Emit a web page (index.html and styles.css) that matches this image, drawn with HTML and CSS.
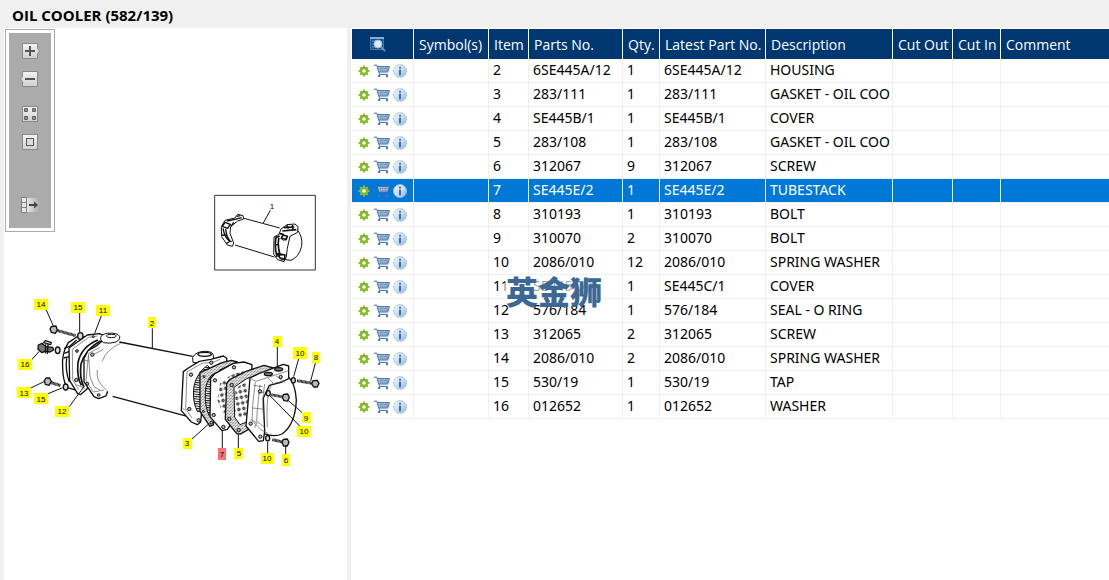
FILE: index.html
```html
<!DOCTYPE html>
<html lang="en">
<head>
<meta charset="utf-8">
<title>OIL COOLER (582/139)</title>
<link rel="stylesheet" href="styles.css">
</head>
<body>
<svg class="sprite" aria-hidden="true">
  <defs>
    <linearGradient id="tile" x1="0" y1="0" x2="0" y2="1"><stop offset="0" stop-color="#f4f4f4"/><stop offset="1" stop-color="#cfcfcf"/></linearGradient>
    <linearGradient id="fade" x1="0" y1="0" x2="1" y2="0"><stop offset="0" stop-color="#e8e8e8"/><stop offset="1" stop-color="#ababab"/></linearGradient>
    <linearGradient id="ball" x1="0" y1="0" x2="1" y2="1"><stop offset="0" stop-color="#eef6fc"/><stop offset="0.5" stop-color="#c9dff0"/><stop offset="1" stop-color="#8db4d6"/></linearGradient>
    <symbol id="gear" viewBox="0 0 12 12">
      <path d="M6 .6V11.4M.6 6H11.4M2.200 2.200L9.800 9.800M9.800 2.200L2.200 9.800" stroke="#8fc035" stroke-width="2"/>
      <circle cx="6" cy="6" r="3" fill="#fff" stroke="#86b82a" stroke-width="2.400"/>
    </symbol>
    <symbol id="cart" viewBox="0 0 16 14">
      <path d="M3.500 2.500H15.300L13.600 8H5.200Z" fill="#c6d5e6"/>
      <path d="M0 1.200H2.700L5.600 10.500M3.300 2.600H15.400L13.800 8H5M5.400 10.400H13.600" fill="none" stroke="#3f6ca5" stroke-width="1"/>
      <path d="M4 4.400H14.800M4.600 6.200H14.200M6.200 2.600L7 8M8.600 2.600L9 8M11 2.600V8M13.200 2.600L12.400 8" fill="none" stroke="#6489b8" stroke-width=".7"/>
      <circle cx="5.200" cy="12" r="1.200" fill="#4d78ad"/><circle cx="13" cy="12" r="1.200" fill="#4d78ad"/>
    </symbol>
    <symbol id="info" viewBox="0 0 14 14">
      <circle cx="7" cy="7" r="6.500" fill="url(#ball)" stroke="#a9c4dc" stroke-width="0.800"/>
      <path d="M6 2.800H8V4.600H6ZM6 5.800H8V11.200H6Z" fill="#386ca5"/>
    </symbol>
  </defs>
</svg>

<header class="title-bar"><h1>OIL COOLER (582/139)</h1></header>

<main class="split">
  <section class="drawing" aria-label="Parts drawing">
    <svg class="sheet" viewBox="0 28 343 552" role="img" aria-label="Exploded view of the oil cooler">
      <defs>
        <pattern id="grain" width="9" height="9" patternUnits="userSpaceOnUse">
          <rect width="9" height="9" fill="#dcdcdc"/>
          <path d="M1 1h2v2h-2zM6 3h2v1h-2zM3 6h2v2h-2zM7 7h1v2h-1z" fill="#555"/>
        </pattern>
        <pattern id="holes" width="15" height="17" patternUnits="userSpaceOnUse" patternTransform="rotate(-12)">
          <circle cx="6" cy="7" r="4" fill="#777" stroke="#111" stroke-width="2.400"/>
        </pattern>
        <pattern id="fins" width="8" height="7" patternUnits="userSpaceOnUse" patternTransform="rotate(8)">
          <rect width="8" height="7" fill="#fff"/><rect width="8" height="3" fill="#111"/>
        </pattern>
      </defs>

      <!-- inset view -->
      <g transform="translate(201 185) scale(.3333)" class="ink">
        <rect x="29" y="31" width="302" height="224" class="frame"/>
        <path d="M196 76L175 114M117 100L224 129M90 180L208 216" class="line"/>
        <path d="M90 99L60 106L49 125L50 155L67 180L82 184L86 174L75 145L77 125L98 108L116 102L114 92L98 88Z"/>
        <path d="M52 124L68 130L76 118L60 112ZM54 130Q60 165 80 170M62 132Q64 155 74 166M50 150L64 152M66 108L90 103L110 98M78 124L86 112M65 175L76 168M96 94L106 92" class="dark"/>
        <path d="M275 132Q294 154 290 184Q282 216 258 226L242 224L238 160Z"/>
        <path d="M228 132L246 119L270 117L279 125L278 142L255 154L247 190L244 216L237 230L218 224L206 208L207 156L222 148Z"/>
        <path d="M232 138L274 134M236 128L268 126M246 121L250 132M262 120L264 132M214 154Q207 180 216 216M222 158Q216 180 226 212M234 150L247 154L243 164L229 160ZM212 158L224 153M209 178L221 180M218 206L240 210L238 224L224 218ZM224 146L236 148" class="heavy"/>
        <circle cx="236" cy="163" r="3"/><circle cx="231" cy="222" r="3"/>
      </g>

      <!-- end cover, flange and tap on the left -->
      <g transform="translate(6 290) scale(.3333)" class="ink">
        <path d="M205 138L175 158Q154 190 158 235Q159 270 170 292L195 300L250 145Z" class="edge"/>
        <path d="M163 190L178 184M161 204L178 200M162 176L180 168L200 150M170 205Q165 240 178 276" class="dark"/>
        <path d="M177 174L232 135L268 131L290 140L286 160L240 200L232 296L211 314L203 311L179 272Z" class="edge"/>
        <path d="M187 178L236 142L262 138M187 178L188 268L205 298M199 284L226 296" class="thin"/>
        <path d="M264 150Q214 170 204 218Q200 262 214 286M272 152Q226 178 213 222Q208 262 221 290" class="heavy"/>
        <path d="M222 205L234 182L262 166L282 148L310 146L330 150L336 155L334 308L292 292L292 316L266 326L252 320L222 275Z" stroke="none"/>
        <path d="M282 148L262 166L234 182L222 205L222 275L252 320L266 326L288 318L293 304" class="dark"/>
        <path d="M272 148Q270 133 292 130Q322 127 329 139Q330 151 318 156Q300 162 280 158Z"/>
        <ellipse cx="304" cy="138" rx="15" ry="5"/>
        <path d="M236 190L228 272L250 306L282 300M236 190L270 172M246 196L280 178M332 160Q292 176 276 214M262 240Q256 275 290 300M224 210L236 214M236 196L240 260L252 290L270 300" class="thin"/>
        <circle cx="201" cy="183" r="4"/><circle cx="199" cy="270" r="5"/><circle cx="247" cy="194" r="5"/><circle cx="232" cy="281" r="4"/><circle cx="266" cy="315" r="4"/><circle cx="250" cy="140" r="3"/>
        <path d="M140 121L197 137" class="shaft"/>
        <path d="M124 110L138 108L142 120L136 130L124 127L120 117Z" class="head"/>
        <ellipse cx="211" cy="138" rx="8" ry="10" class="ring"/>
        <ellipse cx="143" cy="181" rx="7" ry="10" class="ring"/>
        <path d="M85 165L96 160L108 170L128 172L131 180L120 186L104 184L96 188L84 178Z" class="metal"/>
        <path d="M101 158L106 152L124 158L122 164ZM107 163L106 190M114 164L112 192" class="dark"/>
        <path d="M121 277L152 287" class="shaft"/>
        <path d="M108 264L119 264L124 275L117 286L106 283L103 272Z" class="head"/>
        <ellipse cx="167" cy="291" rx="7" ry="9" class="ring"/>
        <path d="M108 58L130 108M209 65V126M277 70L254 130M64 210L88 184M56 297L102 275M107 314L158 293M178 350L224 287" class="line"/>
      </g>

      <!-- housing flange, gasket and tube stack -->
      <g transform="translate(116 310) scale(.3333)" class="ink">
        <path d="M-2 96L218 139M-22 259L205 320" class="edge"/>
        <path d="M219 158L218 142Q228 124 255 124Q281 124 280 138L282 156Z"/>
        <ellipse cx="254" cy="133" rx="20" ry="6" class="dark"/>
        <path d="M190 185L205 174L238 154L272 148L310 138L320 145L320 156L256 190L242 336L232 344L214 336L184 302Z" class="edge"/>
        <path d="M201 186L246 160L282 156L300 148M201 186L197 296L216 324M197 300L188 296" class="thin"/>
        <path d="M262 166Q230 190 222 228Q216 274 232 304L258 306L276 180Z" fill="url(#fins)"/>
        <path d="M240 188L306 158L334 151L352 156L300 180L280 345L270 349L240 304Z" fill="url(#grain)" class="edge"/>
        <path d="M278 192Q256 214 256 250Q254 290 268 318L286 320L290 196Z" fill="url(#fins)"/>
        <path d="M272 205L286 190L340 160L372 156L396 164L392 260L322 358L306 362L270 320Z" class="edge"/>
        <path d="M300 220L328 198L372 180L372 300L320 336L292 270Z" fill="url(#holes)" stroke="none"/>
        <circle cx="213" cy="194" r="5"/><circle cx="208" cy="297" r="5"/><circle cx="236" cy="331" r="5"/><circle cx="274" cy="158" r="5"/><circle cx="285" cy="211" r="5"/><circle cx="281" cy="315" r="5"/><circle cx="310" cy="351" r="5"/><circle cx="342" cy="172" r="5"/><circle cx="252" cy="200" r="3"/><circle cx="250" cy="304" r="3"/><circle cx="274" cy="338" r="4"/>
        <path d="M97 55V116M215 388L268 340M307 415V360" class="line"/>
      </g>

      <!-- right gasket, end cover and bolts -->
      <g transform="translate(216 330) scale(.3333)" class="ink">
        <path d="M20 160L30 148L78 124L132 106L160 114L100 290L62 312L50 311L16 268Z" fill="url(#grain)" class="edge"/>
        <path d="M42 172L80 146L112 134L90 272L60 284L44 262Z" fill="#fff"/>
        <path d="M46 176L80 152L88 262L60 262L46 245Z" fill="url(#holes)" stroke="none"/>
        <path d="M204 140Q226 158 229 210Q226 284 186 312Q164 322 134 312" class="edge"/>
        <path d="M90 144L118 130L190 103L206 108L206 146L186 156L148 166L130 204L134 304L130 332L116 334L78 288L84 220Z" class="edge"/>
        <path d="M92 146L108 154L206 122M106 156L98 226L96 272L124 300L144 310M120 164L112 240L110 274L134 292M134 162Q124 220 132 270M100 166L128 170M114 190L134 186M98 234L132 238M168 138L196 158M144 144L158 158L148 178M92 268L110 278L104 294" class="thin"/>
        <path d="M208 144Q186 158 164 160M148 176Q138 220 142 292" class="thin"/>
        <ellipse cx="145" cy="132" rx="12" ry="5" class="metal"/><ellipse cx="176" cy="118" rx="12" ry="5" class="metal"/>
        <circle cx="182" cy="141" r="5"/><circle cx="120" cy="184" r="5"/><circle cx="92" cy="281" r="5"/><circle cx="121" cy="320" r="5"/><circle cx="35" cy="165" r="5"/><circle cx="28" cy="267" r="5"/><circle cx="56" cy="300" r="5"/>
        <path d="M231 152L278 160M154 194L190 201M157 329L188 336" class="shaft"/>
        <path d="M279 152L292 151L297 160L292 171L281 171L275 161Z" class="head"/>
        <path d="M191 193L203 192L208 202L203 213L192 212L187 202Z" class="head"/>
        <path d="M190 328L202 327L207 337L202 348L191 348L186 338Z" class="head"/>
        <ellipse cx="220" cy="151" rx="6" ry="8" class="ring"/><ellipse cx="145" cy="190" rx="6" ry="8" class="ring"/><ellipse cx="143" cy="325" rx="6" ry="8" class="ring"/>
        <path d="M172 47V110M237 82L221 140M287 96L272 153M249 250L204 211M241 290L150 197M143 370V336M197 375V348M55 360V312" class="line"/>
      </g>

      <g class="tags">
        <rect x="30" y="299" width="14" height="11"/><rect x="67" y="302" width="14" height="11"/><rect x="92" y="305" width="14" height="11"/><rect x="14" y="359" width="14" height="11"/><rect x="13" y="387" width="14" height="11"/><rect x="30" y="393" width="14" height="11"/><rect x="51" y="406" width="14" height="11"/><rect x="144" y="317" width="8" height="11"/><rect x="179" y="438" width="9" height="11"/><rect x="214" y="448" width="8" height="12" class="hot"/><rect x="230" y="448" width="9" height="11"/><rect x="269" y="336" width="9" height="11"/><rect x="289" y="347" width="14" height="12"/><rect x="308" y="352" width="8" height="11"/><rect x="298" y="412" width="9" height="11"/><rect x="293" y="426" width="14" height="11"/><rect x="257" y="453" width="13" height="11"/><rect x="278" y="454" width="8" height="12"/>
        <text x="37" y="307">14</text><text x="74" y="310">15</text><text x="99" y="313">11</text><text x="21" y="367">16</text><text x="20" y="396">13</text><text x="37" y="402">15</text><text x="58" y="414">12</text><text x="148" y="326">2</text><text x="183" y="446">3</text><text x="218" y="457">7</text><text x="235" y="456">5</text><text x="273" y="344">4</text><text x="296" y="356">10</text><text x="312" y="360">8</text><text x="302" y="421">9</text><text x="300" y="434">10</text><text x="263" y="461">10</text><text x="282" y="463">6</text><text x="268" y="209">1</text>
      </g>
    </svg>

    <div class="tools" role="toolbar" aria-label="Drawing tools">
      <button type="button" aria-label="Zoom in"><svg viewBox="0 0 20 16"><path d="M2.500 .5H17.500V5.500L19.500 8L17.500 10.500V15.500H2.500Z" fill="url(#tile)" stroke="#8a8a8a"/><path d="M10 3V13M5 8H15" stroke="#555" stroke-width="2"/></svg></button>
      <button type="button" aria-label="Zoom out"><svg viewBox="0 0 20 16"><path d="M2.500 .5H17.500V15.500H2.500V10.500L.5 8L2.500 5.500Z" fill="url(#tile)" stroke="#8a8a8a"/><path d="M5 8H15" stroke="#555" stroke-width="2"/></svg></button>
      <button type="button" class="group" aria-label="Fit to window"><svg viewBox="0 0 20 16"><rect x="2.500" y=".5" width="15" height="15" fill="url(#tile)" stroke="#8a8a8a"/><path d="M4.500 2.500h3v3h-3zM12.500 2.500h3v3h-3zM4.500 10.500h3v3h-3zM12.500 10.500h3v3h-3z" fill="#888" stroke="#666"/></svg></button>
      <button type="button" aria-label="Actual size"><svg viewBox="0 0 20 16"><rect x="2.500" y=".5" width="15" height="15" fill="url(#tile)" stroke="#8a8a8a"/><rect x="6.500" y="4.500" width="7" height="7" fill="#ddd" stroke="#555"/></svg></button>
      <button type="button" class="last" aria-label="Show list"><svg viewBox="0 0 20 16"><rect x="7" y="1" width="12" height="14" fill="url(#fade)"/><path d="M1.500 .5h5v15h-5zM1.500 5.500h5M1.500 10.500h5" fill="#e6e6e6" stroke="#808080"/><path d="M9 8H15" stroke="#444" stroke-width="2"/><path d="M14 4.500L18 8L14 11.500Z" fill="#444"/></svg></button>
    </div>
  </section>

  <section class="parts">
    <table>
      <colgroup><col class="c-act"><col class="c-sym"><col class="c-item"><col class="c-part"><col class="c-qty"><col class="c-latest"><col class="c-desc"><col class="c-out"><col class="c-in"><col></colgroup>
      <thead>
        <tr><th class="find"><button type="button" aria-label="Search"><svg viewBox="0 0 16 16"><path d="M.5 1.500H13.500V13.500H.5Z" fill="#155082" stroke="#3a78ad"/><path d="M0 2H14" stroke="#7fb0d8" stroke-width="2"/><path d="M2 5h3M2 8h3M2 11h3" stroke="#5f9bcb"/><path d="M11 11L15 15" stroke="#5c93c4" stroke-width="2"/><circle cx="8" cy="8" r="4" fill="#dcebf5" stroke="#9bb9d0"/></svg></button></th><th>Symbol(s)</th><th>Item</th><th>Parts No.</th><th>Qty.</th><th>Latest Part No.</th><th>Description</th><th>Cut Out</th><th>Cut In</th><th>Comment</th></tr>
      </thead>
      <tbody>
        <tr><td class="act"><button type="button" aria-label="Options"><svg class="g"><use href="#gear"/></svg></button><button type="button" aria-label="Add to cart"><svg class="k"><use href="#cart"/></svg></button><button type="button" aria-label="Information"><svg class="i"><use href="#info"/></svg></button></td><td></td><td>2</td><td>6SE445A/12</td><td>1</td><td>6SE445A/12</td><td>HOUSING</td><td></td><td></td><td></td></tr>
        <tr><td class="act"><button type="button" aria-label="Options"><svg class="g"><use href="#gear"/></svg></button><button type="button" aria-label="Add to cart"><svg class="k"><use href="#cart"/></svg></button><button type="button" aria-label="Information"><svg class="i"><use href="#info"/></svg></button></td><td></td><td>3</td><td>283/111</td><td>1</td><td>283/111</td><td>GASKET - OIL COO</td><td></td><td></td><td></td></tr>
        <tr><td class="act"><button type="button" aria-label="Options"><svg class="g"><use href="#gear"/></svg></button><button type="button" aria-label="Add to cart"><svg class="k"><use href="#cart"/></svg></button><button type="button" aria-label="Information"><svg class="i"><use href="#info"/></svg></button></td><td></td><td>4</td><td>SE445B/1</td><td>1</td><td>SE445B/1</td><td>COVER</td><td></td><td></td><td></td></tr>
        <tr><td class="act"><button type="button" aria-label="Options"><svg class="g"><use href="#gear"/></svg></button><button type="button" aria-label="Add to cart"><svg class="k"><use href="#cart"/></svg></button><button type="button" aria-label="Information"><svg class="i"><use href="#info"/></svg></button></td><td></td><td>5</td><td>283/108</td><td>1</td><td>283/108</td><td>GASKET - OIL COO</td><td></td><td></td><td></td></tr>
        <tr><td class="act"><button type="button" aria-label="Options"><svg class="g"><use href="#gear"/></svg></button><button type="button" aria-label="Add to cart"><svg class="k"><use href="#cart"/></svg></button><button type="button" aria-label="Information"><svg class="i"><use href="#info"/></svg></button></td><td></td><td>6</td><td>312067</td><td>9</td><td>312067</td><td>SCREW</td><td></td><td></td><td></td></tr>
        <tr class="selected" aria-selected="true"><td class="act"><button type="button" aria-label="Options"><svg class="g"><use href="#gear"/></svg></button><button type="button" aria-label="Add to cart"><svg class="k"><use href="#cart"/></svg></button><button type="button" aria-label="Information"><svg class="i"><use href="#info"/></svg></button></td><td></td><td>7</td><td>SE445E/2</td><td>1</td><td>SE445E/2</td><td>TUBESTACK</td><td></td><td></td><td></td></tr>
        <tr><td class="act"><button type="button" aria-label="Options"><svg class="g"><use href="#gear"/></svg></button><button type="button" aria-label="Add to cart"><svg class="k"><use href="#cart"/></svg></button><button type="button" aria-label="Information"><svg class="i"><use href="#info"/></svg></button></td><td></td><td>8</td><td>310193</td><td>1</td><td>310193</td><td>BOLT</td><td></td><td></td><td></td></tr>
        <tr><td class="act"><button type="button" aria-label="Options"><svg class="g"><use href="#gear"/></svg></button><button type="button" aria-label="Add to cart"><svg class="k"><use href="#cart"/></svg></button><button type="button" aria-label="Information"><svg class="i"><use href="#info"/></svg></button></td><td></td><td>9</td><td>310070</td><td>2</td><td>310070</td><td>BOLT</td><td></td><td></td><td></td></tr>
        <tr><td class="act"><button type="button" aria-label="Options"><svg class="g"><use href="#gear"/></svg></button><button type="button" aria-label="Add to cart"><svg class="k"><use href="#cart"/></svg></button><button type="button" aria-label="Information"><svg class="i"><use href="#info"/></svg></button></td><td></td><td>10</td><td>2086/010</td><td>12</td><td>2086/010</td><td>SPRING WASHER</td><td></td><td></td><td></td></tr>
        <tr><td class="act"><button type="button" aria-label="Options"><svg class="g"><use href="#gear"/></svg></button><button type="button" aria-label="Add to cart"><svg class="k"><use href="#cart"/></svg></button><button type="button" aria-label="Information"><svg class="i"><use href="#info"/></svg></button></td><td></td><td>11</td><td>SE445C/1</td><td>1</td><td>SE445C/1</td><td>COVER</td><td></td><td></td><td></td></tr>
        <tr><td class="act"><button type="button" aria-label="Options"><svg class="g"><use href="#gear"/></svg></button><button type="button" aria-label="Add to cart"><svg class="k"><use href="#cart"/></svg></button><button type="button" aria-label="Information"><svg class="i"><use href="#info"/></svg></button></td><td></td><td>12</td><td>576/184</td><td>1</td><td>576/184</td><td>SEAL - O RING</td><td></td><td></td><td></td></tr>
        <tr><td class="act"><button type="button" aria-label="Options"><svg class="g"><use href="#gear"/></svg></button><button type="button" aria-label="Add to cart"><svg class="k"><use href="#cart"/></svg></button><button type="button" aria-label="Information"><svg class="i"><use href="#info"/></svg></button></td><td></td><td>13</td><td>312065</td><td>2</td><td>312065</td><td>SCREW</td><td></td><td></td><td></td></tr>
        <tr><td class="act"><button type="button" aria-label="Options"><svg class="g"><use href="#gear"/></svg></button><button type="button" aria-label="Add to cart"><svg class="k"><use href="#cart"/></svg></button><button type="button" aria-label="Information"><svg class="i"><use href="#info"/></svg></button></td><td></td><td>14</td><td>2086/010</td><td>2</td><td>2086/010</td><td>SPRING WASHER</td><td></td><td></td><td></td></tr>
        <tr><td class="act"><button type="button" aria-label="Options"><svg class="g"><use href="#gear"/></svg></button><button type="button" aria-label="Add to cart"><svg class="k"><use href="#cart"/></svg></button><button type="button" aria-label="Information"><svg class="i"><use href="#info"/></svg></button></td><td></td><td>15</td><td>530/19</td><td>1</td><td>530/19</td><td>TAP</td><td></td><td></td><td></td></tr>
        <tr><td class="act"><button type="button" aria-label="Options"><svg class="g"><use href="#gear"/></svg></button><button type="button" aria-label="Add to cart"><svg class="k"><use href="#cart"/></svg></button><button type="button" aria-label="Information"><svg class="i"><use href="#info"/></svg></button></td><td></td><td>16</td><td>012652</td><td>1</td><td>012652</td><td>WASHER</td><td></td><td></td><td></td></tr>
      </tbody>
    </table>
  </section>
</main>
<div class="watermark" lang="zh">英金狮</div>
</body>
</html>
```
FILE: styles.css
```css
* { box-sizing: border-box; }
body {
  margin: 0;
  min-height: 100vh;
  display: flex;
  flex-direction: column;
  position: relative;
  background: #f0f0f0;
  color: #000;
  font: 14px/20px "Open Sans", "Noto Sans", sans-serif;
}
button {
  display: block;
  margin: 0;
  padding: 0;
  border: 0;
  background: none;
  line-height: 0;
}
.sprite { position: absolute; width: 0; height: 0; }

.title-bar { padding: 5px 12px 3px; }
.title-bar h1 { margin: 0; font-size: 15px; line-height: 20px; font-weight: 700; }

.split {
  flex: 1;
  display: grid;
  grid-template-columns: 343px minmax(0, 1fr);
  gap: 4px;
  padding-left: 4px;
}
.drawing { position: relative; background: #fff; }
.sheet { display: block; width: 100%; }
.ink { fill: #fff; stroke: #111; stroke-width: 3; stroke-linejoin: round; }
.ink .frame { stroke: #333; stroke-width: 3; }
.ink .line { fill: none; stroke-width: 3; }
.ink .thin { fill: none; stroke: #555; stroke-width: 2; }
.ink .heavy { fill: none; stroke-width: 5; }
.ink .edge { stroke-width: 4; }
.ink .dark { fill: none; stroke-width: 4; }
.ink .metal { fill: #777; stroke-width: 4; }
.ink .ring { fill: #ddd; stroke-width: 4; }
.ink .shaft { fill: none; stroke: #222; stroke-width: 9; stroke-dasharray: 3 1; }
.ink .head { fill: #bbb; stroke-width: 4; }
.ink circle { stroke-width: 3; fill: #bbb; }
.tags rect { fill: #ff0; }
.tags .hot { fill: #f87474; }
.tags text { font: 8px "Liberation Sans", Arial, sans-serif; text-anchor: middle; }

.tools {
  position: absolute;
  top: 1px;
  left: 1px;
  width: 50px;
  height: 203px;
  padding-top: 13px;
  border: 1px solid #ababab;
  background: #ababab;
  box-shadow: inset 0 0 0 3px #fff;
  display: flex;
  flex-direction: column;
  align-items: center;
  gap: 12px;
}
.tools .group { margin-top: 7px; }
.tools .last { margin-top: 35px; }
.tools svg { width: 20px; height: 16px; }

.parts { background: #fff; padding: 1px 0 0 1px; }
table {
  width: 100%;
  table-layout: fixed;
  border-collapse: separate;
  border-spacing: 0;
}
.c-act { width: 62px; }
.c-sym { width: 75px; }
.c-item { width: 40px; }
.c-part { width: 94px; }
.c-qty { width: 37px; }
.c-latest { width: 106px; }
.c-desc { width: 127px; }
.c-out { width: 60px; }
.c-in { width: 48px; }
th {
  height: 30px;
  padding: 2px 0 0 5px;
  background: #003770;
  color: #fff;
  font-weight: 400;
  text-align: left;
  white-space: nowrap;
  border-right: 1px solid #fff;
}
.find { padding: 0 0 0 18px; }
.find svg { width: 16px; height: 16px; }
td {
  height: 24px;
  padding: 0 0 1px 4px;
  font-family: "Noto Sans", "Open Sans", sans-serif;
  white-space: nowrap;
  overflow: hidden;
  border-right: 1px solid #f0f0f0;
  border-bottom: 1px solid #f0f0f0;
}
th:last-child, td:last-child { border-right: 0; }
.act { padding: 0 0 0 6px; line-height: 0; }
.act button { display: inline-block; vertical-align: middle; }
.act svg { display: block; }
.act .g { width: 12px; height: 12px; margin-right: 4px; }
.act .k { width: 16px; height: 14px; margin-right: 3px; }
.act .i { width: 14px; height: 14px; }
.selected td { background: #0078d7; color: #fff; }

.watermark {
  position: absolute;
  left: 505px;
  top: 277px;
  padding: 0 1px;
  background: rgba(255, 255, 255, 0.65);
  color: #3c6896;
  font: 900 32px/27px "Noto Sans CJK SC", sans-serif;
}
```
